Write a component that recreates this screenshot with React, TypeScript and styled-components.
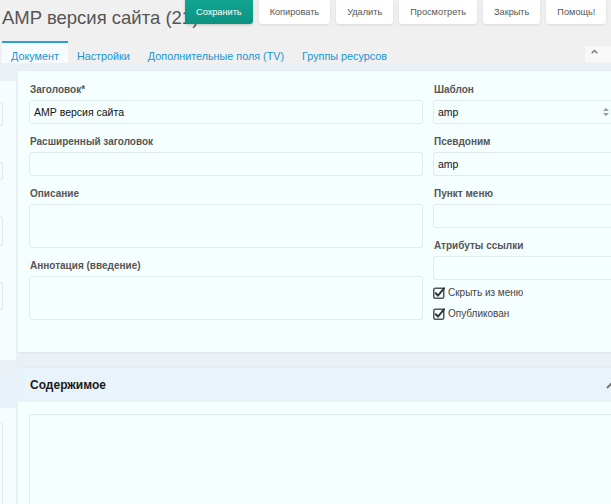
import styled, { createGlobalStyle, css } from 'styled-components'

const GlobalStyle = createGlobalStyle`
  html, body {
    margin: 0;
    padding: 0;
    background: #f0f0f0;
    font-family: 'Liberation Sans', Arial, sans-serif;
  }
`

const buttons = ['Копировать', 'Удалить', 'Просмотреть', 'Закрыть', 'Помощь!']
const tabs = ['Документ', 'Настройки', 'Дополнительные поля (TV)', 'Группы ресурсов']

function CheckIcon() {
  return (
    <svg width="12" height="12" viewBox="0 0 12 12">
      <rect x="0.75" y="1.25" width="10" height="10" rx="1.5" fill="none" stroke="#555" strokeWidth="1.5" />
      <path d="M2.8 6.2 L5 8.6 L11.2 1.2" fill="none" stroke="#333" strokeWidth="2" strokeLinecap="round" />
    </svg>
  )
}

function SelectArrows() {
  return (
    <svg width="6" height="10" viewBox="0 0 6 10">
      <path d="M0 4 L3 1 L6 4 Z M0 6 L3 9 L6 6 Z" fill="#999" />
    </svg>
  )
}

function Chevron() {
  return (
    <svg width="10" height="7" viewBox="0 0 10 7">
      <path d="M1 6 L5 2 L9 6" fill="none" stroke="#777" strokeWidth="2" />
    </svg>
  )
}

export default function App() {
  return (
    <>
      <GlobalStyle />
      <Root>
        <Header>
          <Title>AMP версия сайта (21)</Title>
          <Toolbar>
            <ActionButton $primary>Сохранить</ActionButton>
            {buttons.map((b) => (
              <ActionButton key={b}>{b}</ActionButton>
            ))}
          </Toolbar>
        </Header>

        <TabBar>
          {tabs.map((t, i) => (
            <Tab key={t} $active={i === 0}>
              {t}
            </Tab>
          ))}
          <TabScroll>
            <Chevron />
          </TabScroll>
        </TabBar>

        <Body>
          <Side>
            <SidePanel>
              <SideField $h={22} />
              <SideField $h={16} />
              <SideField $h={28} />
              <SideField $h={26} />
            </SidePanel>
            <SideHeader />
            <SidePanel $grow>
              <SideField $h={120} />
            </SidePanel>
          </Side>

          <Main>
            <Panel>
              <FormGrid>
                <Column>
                  <Field>
                    <Label>Заголовок*</Label>
                    <Input>АМР версия сайта</Input>
                  </Field>
                  <Field>
                    <Label>Расширенный заголовок</Label>
                    <Input />
                  </Field>
                  <Field>
                    <Label>Описание</Label>
                    <Input $tall />
                  </Field>
                  <Field>
                    <Label>Аннотация (введение)</Label>
                    <Input $tall />
                  </Field>
                </Column>
                <Column>
                  <Field>
                    <Label>Шаблон</Label>
                    <Input>
                      amp
                      <SelectArrows />
                    </Input>
                  </Field>
                  <Field>
                    <Label>Псевдоним</Label>
                    <Input>amp</Input>
                  </Field>
                  <Field>
                    <Label>Пункт меню</Label>
                    <Input />
                  </Field>
                  <Field>
                    <Label>Атрибуты ссылки</Label>
                    <Input />
                  </Field>
                  <Checks>
                    <CheckRow>
                      <CheckIcon />
                      Скрыть из меню
                    </CheckRow>
                    <CheckRow>
                      <CheckIcon />
                      Опубликован
                    </CheckRow>
                  </Checks>
                </Column>
              </FormGrid>
            </Panel>

            <ContentPanel>
              <ContentHeader>
                Содержимое
                <Chevron />
              </ContentHeader>
              <ContentBody>
                <Editor />
              </ContentBody>
            </ContentPanel>
          </Main>
        </Body>
      </Root>
    </>
  )
}

const Root = styled.div`
  width: 611px;
  height: 504px;
  overflow: hidden;
  display: flex;
  flex-direction: column;
  position: relative;
`

const Header = styled.div`
  height: 40px;
  flex: none;
`

const Title = styled.h1`
  margin: 0;
  padding: 7px 0 0 2px;
  font-size: 18.5px;
  font-weight: normal;
  color: #555;
  white-space: nowrap;
`

const Toolbar = styled.div`
  position: absolute;
  top: 0;
  left: 185px;
  display: flex;
  gap: 6px;
`

const ActionButton = styled.div<{ $primary?: boolean }>`
  height: 24px;
  line-height: 24px;
  padding: 0 11px;
  font-size: 9.2px;
  white-space: nowrap;
  border-radius: 0 0 3px 3px;
  background: #fff;
  color: #555;
  box-shadow: 0 1px 3px rgba(0, 0, 0, 0.1);

  ${(p) =>
    p.$primary &&
    css`
      background: linear-gradient(#13a592, #0c9382);
      color: #fff;
      box-shadow: 0 1px 3px rgba(0, 0, 0, 0.2);
    `}
`

const TabBar = styled.div`
  display: flex;
  align-items: flex-end;
  height: 23px;
  padding: 0 0 0 2px;
  flex: none;
`

const Tab = styled.div<{ $active?: boolean }>`
  height: 22px;
  padding: 6px 9px 0;
  box-sizing: border-box;
  font-size: 10.8px;
  line-height: 14px;
  color: #1a95d1;
  white-space: nowrap;
  border-top: 2px solid transparent;

  ${(p) =>
    p.$active &&
    css`
      border-top-color: #2c9fd8;
      background: #f6fcfe;
      padding: 6px 9px 0;
    `}
`

const TabScroll = styled.div`
  margin-left: auto;
  width: 26px;
  height: 16px;
  margin-bottom: 1px;
  display: flex;
  justify-content: flex-start;
  padding-left: 6px;
  box-sizing: border-box;
  background: rgba(255, 255, 255, 0.5);

  svg {
    width: 7px;
    height: 5px;
    margin-top: 3px;
  }
`

const Body = styled.div`
  flex: 1;
  display: flex;
  gap: 2px;
  padding-top: 8px;
  background: #e9f1f6;
  min-height: 0;
`

const Side = styled.div`
  width: 16px;
  flex: none;
  display: flex;
  flex-direction: column;
  padding-top: 10px;
`

const SidePanel = styled.div<{ $grow?: boolean }>`
  background: #f5fdff;
  height: ${(p) => (p.$grow ? 'auto' : '279px')};
  flex: ${(p) => (p.$grow ? '1' : 'none')};
  padding-top: ${(p) => (p.$grow ? '15px' : '21px')};
  display: flex;
  flex-direction: column;
  gap: 36px;
  box-sizing: border-box;
`

const SideField = styled.div<{ $h: number }>`
  width: 2px;
  height: ${(p) => p.$h}px;
  border: 1px solid #e0e8ec;
  border-left: none;
  border-radius: 0 3px 3px 0;
`

const SideHeader = styled.div`
  height: 35px;
  margin-top: 13px;
  background: #e6f1f8;
  flex: none;
`

const Main = styled.div`
  width: 640px;
  flex: none;
  display: flex;
  flex-direction: column;
  gap: 15px;
`

const Panel = styled.div`
  background: #f5ffff;
  padding: 12px 0 31px 11px;
  box-shadow: 0 1px 2px rgba(0, 0, 0, 0.06);
`

const FormGrid = styled.div`
  display: grid;
  grid-template-columns: 394px 186px;
  gap: 10px;
`

const Column = styled.div`
  display: flex;
  flex-direction: column;
  gap: 11px;
`

const Field = styled.div`
  display: flex;
  flex-direction: column;
  gap: 3px;
`

const Label = styled.div`
  font-size: 10px;
  line-height: 14px;
  font-weight: bold;
  color: #555;
  padding-left: 1px;
`

const Input = styled.div<{ $tall?: boolean }>`
  height: ${(p) => (p.$tall ? '44px' : '24px')};
  box-sizing: border-box;
  border: 1px solid #e1eaee;
  border-radius: 3px;
  background: #f6ffff;
  padding: 0 9px 0 4px;
  font-size: 10.5px;
  line-height: 22px;
  color: #111;
  display: flex;
  align-items: ${(p) => (p.$tall ? 'flex-start' : 'center')};
  justify-content: space-between;
`

const Checks = styled.div`
  display: flex;
  flex-direction: column;
  gap: 7px;
  margin-top: -5px;
`

const CheckRow = styled.div`
  display: flex;
  align-items: center;
  gap: 3px;
  font-size: 10px;
  line-height: 14px;
  color: #444;
`

const ContentPanel = styled.div`
  flex: 1;
  display: flex;
  flex-direction: column;
  background: #f5ffff;
`

const ContentHeader = styled.div`
  height: 35px;
  flex: none;
  box-sizing: border-box;
  display: flex;
  align-items: center;
  justify-content: space-between;
  width: 598px;
  padding-left: 12px;
  background: #e8f3fa;
  border-top: 1px solid #e2ecf2;
  font-size: 12px;
  font-weight: bold;
  color: #1a1a1a;
`

const ContentBody = styled.div`
  flex: 1;
  padding: 12px 0 0 11px;
`

const Editor = styled.div`
  height: 100%;
  border: 1px solid #e1eaee;
  border-bottom: none;
  border-radius: 3px 3px 0 0;
  background: #f6ffff;
`
